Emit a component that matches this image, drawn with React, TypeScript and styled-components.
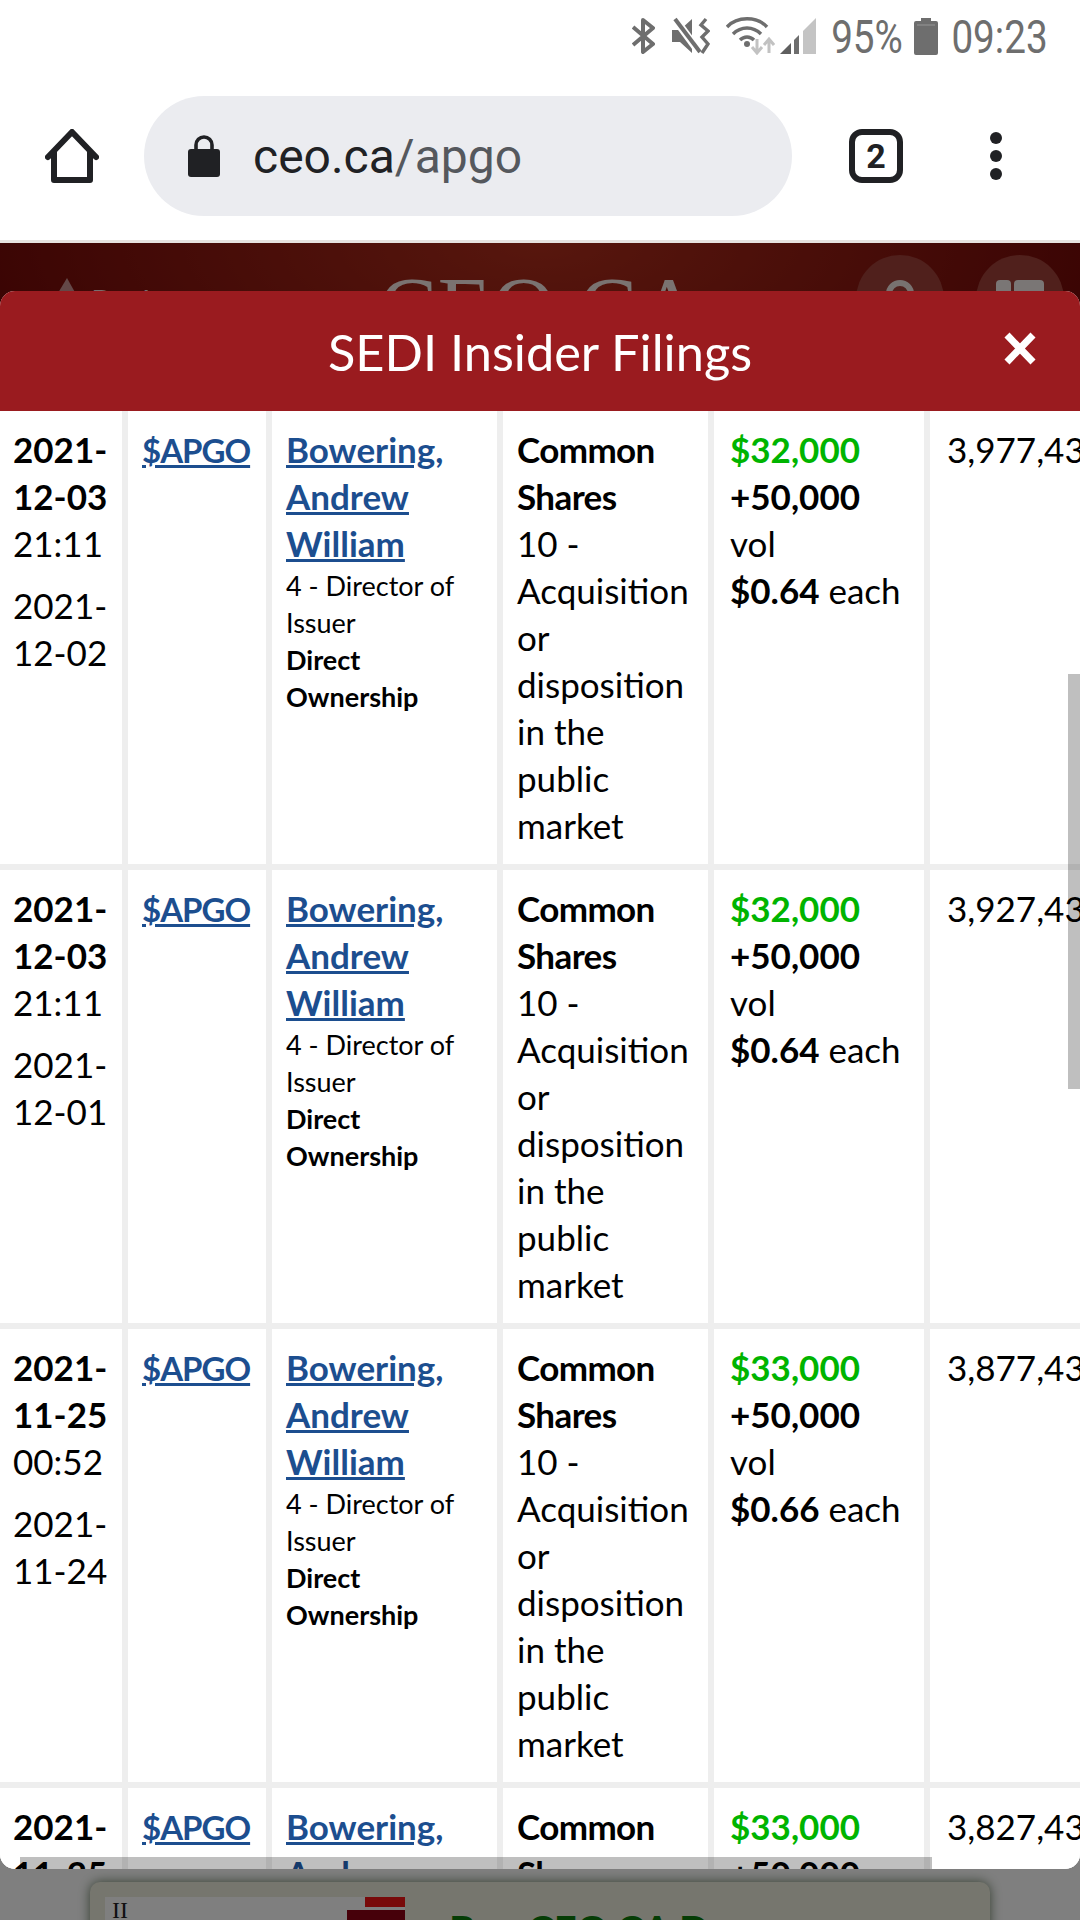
import { FC } from "react";
import styled, { createGlobalStyle } from "styled-components";

type Filing = {
  filed: string;
  time: string;
  traded: string;
  total: string;
  price: string;
  balance: string;
};

const filings: Filing[] = [
  { filed: "2021-12-03", time: "21:11", traded: "2021-12-02", total: "$32,000", price: "$0.64", balance: "3,977,437" },
  { filed: "2021-12-03", time: "21:11", traded: "2021-12-01", total: "$32,000", price: "$0.64", balance: "3,927,437" },
  { filed: "2021-11-25", time: "00:52", traded: "2021-11-24", total: "$33,000", price: "$0.66", balance: "3,877,437" },
  { filed: "2021-11-25", time: "00:52", traded: "2021-11-23", total: "$33,000", price: "$0.66", balance: "3,827,437" },
];

const GlobalStyle = createGlobalStyle`
  html, body {
    margin: 0;
    padding: 0;
    background: #fff;
  }
  * {
    box-sizing: border-box;
  }
`;

const BluetoothIcon = () => (
  <svg width="23" height="38" viewBox="0 0 23 38" fill="none" stroke="#6e6e6e" strokeWidth="4">
    <path d="M1 10 L21 27 L11 35 V3 L21 11 L1 28" strokeLinejoin="round" />
  </svg>
);

const MuteIcon = () => (
  <svg width="38" height="38" viewBox="0 0 38 38" fill="none">
    <path d="M0 13 H8 L20 2 V36 L8 25 H0 Z" fill="#6e6e6e" />
    <path d="M3 2 L28 36" stroke="#fff" strokeWidth="8" />
    <path d="M3 2 L28 35" stroke="#6e6e6e" strokeWidth="4" />
    <path d="M34 2 L29 8 L36 14 L30 20 L36 27 L30 36" stroke="#6e6e6e" strokeWidth="3.4" />
  </svg>
);

const WifiIcon = () => (
  <svg width="49" height="38" viewBox="0 0 49 38" fill="none">
    <path d="M1 10 C11 -1 31 -1 41 10" stroke="#6e6e6e" strokeWidth="3.4" />
    <path d="M7 17 C15 9 27 9 35 17" stroke="#6e6e6e" strokeWidth="3.4" />
    <path d="M14 23 C18 19 24 19 28 23" stroke="#6e6e6e" strokeWidth="3.4" />
    <circle cx="21" cy="27" r="3" fill="#6e6e6e" />
    <path d="M31 22 V35 M26 30 L31 36 L36 30" stroke="#c2c2c2" strokeWidth="3" />
    <path d="M43 36 V23 M38 28 L43 22 L48 28" stroke="#c2c2c2" strokeWidth="3" />
  </svg>
);

const SignalIcon = () => (
  <svg width="36" height="38" viewBox="0 0 36 38">
    <path d="M0 37 L11 26 V37 Z" fill="#5f5f5f" />
    <path d="M14 23 L19 18 V37 H14 Z" fill="#6e6e6e" />
    <path d="M23 14 L36 1 V37 H23 Z" fill="#c4c4c4" />
  </svg>
);

const BatteryIcon = () => (
  <svg width="24" height="38" viewBox="0 0 24 38">
    <path d="M7 1 H17 V4 H22 Q24 4 24 6 V36 Q24 38 22 38 H2 Q0 38 0 36 V6 Q0 4 2 4 H7 Z" fill="#6e6e6e" />
    <path d="M3 8 H21" stroke="#969696" strokeWidth="1" />
  </svg>
);

const HomeIcon = () => (
  <svg width="54" height="54" viewBox="0 0 54 54" fill="none" stroke="#202124" strokeWidth="6" strokeLinejoin="round" strokeLinecap="round">
    <path d="M3 28 L27 3 L51 28 M9 22 V51 H45 V22" />
  </svg>
);

const LockIcon = () => (
  <svg width="32" height="42" viewBox="0 0 32 42" fill="#202124">
    <path d="M8 16 V10 A8 8 0 0 1 24 10 V16" fill="none" stroke="#202124" strokeWidth="3.6" />
    <rect x="0" y="14" width="32" height="28" rx="3" />
  </svg>
);

const BackIcon = () => (
  <svg width="22" height="40" viewBox="0 0 22 40">
    <path d="M12 0 L22 18 L12 40 L0 20 Z" fill="#c89090" />
  </svg>
);

const PersonIcon = () => (
  <svg width="28" height="60" viewBox="0 0 28 60" fill="none" stroke="#f0e4e0" strokeWidth="6">
    <circle cx="14" cy="14" r="11" />
  </svg>
);

const PanelsIcon = () => (
  <svg width="48" height="60" viewBox="0 0 48 60" fill="#f4ecea">
    <rect x="0" y="0" width="15" height="40" rx="4" />
    <rect x="18" y="0" width="30" height="40" rx="4" />
  </svg>
);

const CloseIcon = () => (
  <svg width="32" height="33" viewBox="0 0 32 33" stroke="#fff" strokeWidth="7">
    <path d="M3 3 L29 30 M29 3 L3 30" />
  </svg>
);

const FilingRow: FC<{ filing: Filing }> = ({ filing }) => (
  <>
    <DateCell>
      <strong>{filing.filed}</strong>
      <div>{filing.time}</div>
      <TradeDate>{filing.traded}</TradeDate>
    </DateCell>
    <Cell>
      <TickerLink href="#">$APGO</TickerLink>
    </Cell>
    <Cell>
      <Link href="#">Bowering, Andrew William</Link>
      <SmallText>4 - Director of Issuer</SmallText>
      <SmallText as="strong">Direct Ownership</SmallText>
    </Cell>
    <Cell>
      <SecurityName>Common Shares</SecurityName>
      <br />
      10 - Acquisition or disposition in the public market
    </Cell>
    <Cell $left={16}>
      <Total>{filing.total}</Total>
      <br />
      <strong>+50,000</strong>
      <br />
      vol
      <br />
      <strong>{filing.price}</strong> each
    </Cell>
    <Cell $left={17}>{filing.balance}</Cell>
  </>
);

export default function App() {
  return (
    <>
      <GlobalStyle />
      <Screen>
        <StatusBar>
          <StatusItem $gap={0}>
            <BluetoothIcon />
          </StatusItem>
          <StatusItem $gap={17}>
            <MuteIcon />
          </StatusItem>
          <StatusItem $gap={16}>
            <WifiIcon />
          </StatusItem>
          <StatusItem $gap={5}>
            <SignalIcon />
          </StatusItem>
          <StatusItem $gap={16}>
            <StatusText $width={70}>95%</StatusText>
          </StatusItem>
          <StatusItem $gap={12}>
            <BatteryIcon />
          </StatusItem>
          <StatusItem $gap={14}>
            <StatusText $width={95}>09:23</StatusText>
          </StatusItem>
        </StatusBar>
        <Toolbar>
          <HomeIcon />
          <UrlBar>
            <LockIcon />
            <UrlText>
              ceo.ca<UrlPath>/apgo</UrlPath>
            </UrlText>
          </UrlBar>
          <TabCount>2</TabCount>
          <MenuDots>
            <i />
            <i />
            <i />
          </MenuDots>
        </Toolbar>
        <Viewport>
          <SiteHeader>
            <BackLink>
              <BackIcon />
              <BackLabel>Back</BackLabel>
            </BackLink>
            <SiteLogo>CEO.CA</SiteLogo>
            <HeaderButtons>
              <RoundButton>
                <PersonIcon />
              </RoundButton>
              <RoundButton>
                <PanelsIcon />
              </RoundButton>
            </HeaderButtons>
          </SiteHeader>
          <PageBody>
            <AdCard>
              <AdChart>
                <AdTicks>II</AdTicks>
                <AdBars>
                  <AdBar $width={40} />
                  <AdBar $width={58} $dark />
                </AdBars>
              </AdChart>
              <AdTitle>Buy CEO.CA D</AdTitle>
            </AdCard>
          </PageBody>
          <Backdrop />
          <Modal>
            <ModalHeader>
              <ModalTitle>SEDI Insider Filings</ModalTitle>
              <CloseButton>
                <CloseIcon />
              </CloseButton>
            </ModalHeader>
            <ModalBody>
              <FilingsTable>
                {filings.map((filing) => (
                  <FilingRow key={filing.traded} filing={filing} />
                ))}
              </FilingsTable>
              <VerticalThumb />
              <HorizontalThumb />
            </ModalBody>
          </Modal>
        </Viewport>
      </Screen>
    </>
  );
}

const Screen = styled.div`
  width: 1080px;
  height: 1920px;
  display: flex;
  flex-direction: column;
  overflow: hidden;
  background: #fff;
`;

const StatusBar = styled.div`
  height: 72px;
  display: flex;
  align-items: center;
  justify-content: flex-end;
  padding-right: 33px;
`;

const StatusItem = styled.div<{ $gap: number }>`
  display: flex;
  margin-left: ${({ $gap }) => $gap}px;
`;

const StatusText = styled.span<{ $width: number }>`
  width: ${({ $width }) => $width}px;
  display: flex;
  justify-content: center;
  padding-top: 2px;
  font-family: Roboto, sans-serif;
  font-size: 46px;
  line-height: 50px;
  color: #6e6e6e;
  white-space: nowrap;
  transform: scaleX(0.84);
`;

const Toolbar = styled.div`
  height: 171px;
  display: flex;
  align-items: center;
  padding: 0 0 1px 45px;
  border-bottom: 3px solid #e6e2df;
`;

const UrlBar = styled.div`
  width: 648px;
  height: 120px;
  margin-left: 45px;
  display: flex;
  align-items: center;
  gap: 33px;
  padding-left: 44px;
  border-radius: 60px;
  background: #ebecf0;
`;

const UrlText = styled.span`
  padding-top: 2px;
  font-family: Roboto, sans-serif;
  font-size: 48px;
  color: #202124;
`;

const UrlPath = styled.span`
  color: #55585d;
`;

const TabCount = styled.div`
  width: 54px;
  height: 54px;
  margin-left: 57px;
  display: flex;
  align-items: center;
  justify-content: center;
  border: 6px solid #202124;
  border-radius: 13px;
  font-family: Roboto, sans-serif;
  font-weight: 700;
  font-size: 34px;
  color: #202124;
`;

const MenuDots = styled.div`
  margin-left: 87px;
  display: flex;
  flex-direction: column;
  gap: 6px;

  i {
    display: block;
    width: 12px;
    height: 12px;
    border-radius: 50%;
    background: #202124;
  }
`;

const Viewport = styled.div`
  position: relative;
  flex: 1;
  overflow: hidden;
  background: #fff;
`;

const SiteHeader = styled.header`
  height: 130px;
  display: flex;
  align-items: flex-start;
  padding: 12px 16px 0 55px;
  background: radial-gradient(ellipse 560px 220px at 540px 0, #b02e1c, #760a08);
`;

const BackLink = styled.div`
  display: flex;
  align-items: flex-start;
  gap: 14px;
  width: 324px;
  padding-top: 23px;
`;

const BackLabel = styled.span`
  font-family: Lato, sans-serif;
  font-size: 32px;
  line-height: 40px;
  color: #f0dcdc;
  padding-top: 4px;
`;

const SiteLogo = styled.div`
  width: 478px;
  padding-top: 4px;
  font-family: "Liberation Serif", serif;
  font-size: 88px;
  line-height: 100px;
  letter-spacing: 0.5px;
  color: #f4e6e2;
`;

const HeaderButtons = styled.div`
  display: flex;
  gap: 32px;
`;

const RoundButton = styled.div`
  width: 88px;
  height: 88px;
  display: flex;
  justify-content: center;
  padding-top: 25px;
  border-radius: 50%;
  background: #a04038;
`;

const PageBody = styled.main`
  padding-top: 1509px;
`;

const AdCard = styled.aside`
  height: 120px;
  margin: 0 90px;
  display: flex;
  gap: 44px;
  padding: 15px 15px 0;
  border-radius: 10px;
  background: #ececdc;
  box-shadow: 0 0 12px rgba(40, 70, 30, 0.7);
`;

const AdChart = styled.div`
  flex: 0 0 300px;
  height: 100px;
  display: flex;
  justify-content: space-between;
  padding-left: 7px;
  background: #fff;
`;

const AdTicks = styled.span`
  font-family: "Liberation Serif", serif;
  font-size: 24px;
  color: #222;
`;

const AdBars = styled.div`
  display: flex;
  flex-direction: column;
  align-items: flex-end;
  gap: 3px;
`;

const AdBar = styled.div<{ $width: number; $dark?: boolean }>`
  width: ${({ $width }) => $width}px;
  height: 10px;
  background: ${({ $dark }) => ($dark ? "#8c0014" : "#f01414")};
`;

const AdTitle = styled.div`
  padding-top: 9px;
  font-family: Lato, sans-serif;
  font-weight: 700;
  font-size: 40px;
  line-height: 48px;
  color: #0a7a0a;
`;

const Backdrop = styled.div`
  position: absolute;
  inset: 0;
  background: rgba(0, 0, 0, 0.5);
`;

const Modal = styled.div`
  position: absolute;
  top: 48px;
  left: 0;
  right: 0;
  height: 1578px;
  display: flex;
  flex-direction: column;
  overflow: hidden;
  border-radius: 15px;
  background: #fff;
`;

const ModalHeader = styled.div`
  position: relative;
  flex: 0 0 120px;
  display: flex;
  align-items: center;
  justify-content: center;
  background: #9a1b1f;
`;

const ModalTitle = styled.div`
  font-family: Lato, sans-serif;
  font-size: 50.5px;
  color: #fff;
`;

const CloseButton = styled.div`
  position: absolute;
  top: 41px;
  right: 44px;
  line-height: 0;
`;

const ModalBody = styled.div`
  position: relative;
  flex: 1;
  overflow: hidden;
`;

const FilingsTable = styled.div`
  display: grid;
  grid-template-columns: 122px 138px 225px 205px 210px 150px;
  grid-auto-rows: 453px;
  gap: 6px;
  background: #eee;
  font-family: Lato, sans-serif;
  font-size: 35px;
  line-height: 47px;
  color: #000;
`;

const Cell = styled.div<{ $left?: number }>`
  padding: 15px 14px 15px ${({ $left }) => $left ?? 14}px;
  background: #fff;
  overflow: hidden;
`;

const DateCell = styled(Cell)`
  padding: 15px 6px 15px 13px;
`;

const TradeDate = styled.div`
  margin-top: 15px;
`;

const Link = styled.a`
  font-weight: 700;
  color: #1c4e8f;
  text-decoration: underline;
`;

const TickerLink = styled(Link)`
  font-size: 33px;
  letter-spacing: -1px;
`;

const SecurityName = styled.strong`
  letter-spacing: -0.6px;
`;

const SmallText = styled.div`
  display: block;
  font-size: 27px;
  line-height: 37px;
`;

const Total = styled.strong`
  color: #00b400;
`;

const VerticalThumb = styled.div`
  position: absolute;
  top: 263px;
  right: 0;
  width: 12px;
  height: 415px;
  background: rgba(0, 0, 0, 0.25);
`;

const HorizontalThumb = styled.div`
  position: absolute;
  bottom: 0;
  left: 20px;
  width: 912px;
  height: 12px;
  background: rgba(0, 0, 0, 0.25);
`;
